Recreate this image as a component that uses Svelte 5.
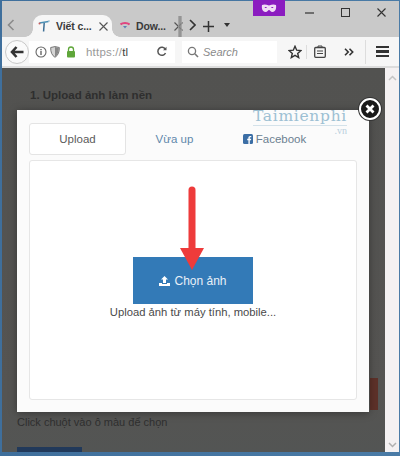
<script>
  const tabs = [
    { id: "upload", label: "Upload", active: true },
    { id: "vua", label: "Vừa up" },
    { id: "fb", label: "Facebook", icon: true }
  ];
</script>

<div class="window">
  <div class="tabstrip">
    <svg class="scroll-left" width="8" height="12" viewBox="0 0 8 12"><path d="M6.500 1 1.500 6l5 5" fill="none" stroke="#8b8b8b" stroke-width="1.600"/></svg>
    <div class="tab active">
      <svg class="favicon" width="12" height="12" viewBox="0 0 12 12"><path d="M1.500 3 10.500 1.500" fill="none" stroke="#4a8fb5" stroke-width="1.500"/><path d="M6.200 3 5.600 11.500" fill="none" stroke="#3d6f96" stroke-width="1.500"/><circle cx="1.500" cy="3.500" r="1" fill="#c65a5a"/><circle cx="11" cy="1" r=".8" fill="#7fb2cc"/></svg>
      <span class="tab-title">Viết c...</span>
      <svg class="tab-close" width="9" height="9" viewBox="0 0 9 9"><path d="M.5.5l8 8M8.500.5l-8 8" stroke="#555" stroke-width="1.100"/></svg>
    </div>
    <div class="tab">
      <svg class="favicon" width="10" height="10" viewBox="0 0 10 10"><path d="M.5 3.500C2 1.500 8 1.500 9.500 3.500" fill="none" stroke="#e0457f" stroke-width="2.200"/><path d="M3 5h4L5 7.500z" fill="#5d7fb5"/></svg>
      <span class="tab-title">Dow...</span>
      <svg class="tab-close" width="9" height="9" viewBox="0 0 9 9"><path d="M.5.5l8 8M8.500.5l-8 8" stroke="#555" stroke-width="1.100"/></svg>
    </div>
    <div class="tab-fade"></div>
    <svg class="scroll-right" width="7" height="12" viewBox="0 0 7 12"><path d="M1 1l5 5-5 5" fill="none" stroke="#333" stroke-width="1.600"/></svg>
    <svg class="plus" width="11" height="11" viewBox="0 0 11 11"><path d="M5.500 0v11M0 5.500h11" stroke="#333" stroke-width="1.500"/></svg>
    <svg class="caret" width="6" height="4" viewBox="0 0 6 4"><path d="M0 0h6L3 4z" fill="#333"/></svg>
    <div class="mask-badge">
      <svg width="16" height="9" viewBox="0 0 16 9"><path fill-rule="evenodd" d="M1 1c2-1 4-.6 7 .4 3-1 5-1.400 7-.4.6 3-.4 7-3.500 7C9.500 8 9 6 8 6s-1.500 2-3.500 2C1.400 8 .4 4 1 1zm2.500 2.200c1-.5 2-.3 2.600.5-1 .6-2 .4-2.600-.5zm9 0c-1-.5-2-.3-2.600.5 1 .6 2 .4 2.600-.5z" fill="#f0dcf5"/></svg>
    </div>
    <div class="win-controls">
      <svg width="9" height="2" viewBox="0 0 9 2"><path d="M0 1h9" stroke="#333" stroke-width="1.200"/></svg>
      <svg width="9" height="9" viewBox="0 0 9 9"><rect x=".5" y=".5" width="8" height="8" fill="none" stroke="#333"/></svg>
      <svg width="9" height="9" viewBox="0 0 9 9"><path d="M.5.5l8 8M8.500.5l-8 8" stroke="#333" stroke-width="1.100"/></svg>
    </div>
  </div>

  <div class="toolbar">
    <div class="back">
      <svg width="14" height="12" viewBox="0 0 14 12"><path d="M6.500 1 2 6l4.500 5M2.500 6H13.500" fill="none" stroke="#333" stroke-width="2.600"/></svg>
    </div>
    <div class="urlbar">
      <svg width="12" height="12" viewBox="0 0 12 12"><circle cx="6" cy="6" r="5" fill="none" stroke="#666" stroke-width="1.100"/><path d="M6 5v4M6 3v1.200" stroke="#666" stroke-width="1.400"/></svg>
      <svg width="10" height="12" viewBox="0 0 10 12"><path d="M.7 1.500 5 .6l4.300.9c.2 4.500-1.300 8-4.300 9.800C2 9.500.5 6 .7 1.500z" fill="#d5d5d5" stroke="#777"/><path d="M5 1v10C7.500 9 9 6 8.800 2z" fill="#888"/></svg>
      <svg class="lock" width="10" height="12" viewBox="0 0 10 12"><path d="M2.500 5V3.500a2.500 2.500 0 0 1 5 0V5" fill="none" stroke="#5fa63a" stroke-width="1.300"/><rect x="1" y="5" width="8" height="6.500" rx="1" fill="#5fa63a"/></svg>
      <span class="url"><span class="url-dim">https://</span>tl</span>
      <svg class="reload" width="11" height="11" viewBox="0 0 11 11"><path d="M9.300 3.200A4 4 0 1 0 9.500 7" fill="none" stroke="#555" stroke-width="1.500"/><path d="M10.500 .8v3.500H7z" fill="#555"/></svg>
    </div>
    <div class="searchbar">
      <svg width="12" height="12" viewBox="0 0 12 12"><circle cx="5" cy="5" r="3.600" fill="none" stroke="#777" stroke-width="1.300"/><path d="M7.800 7.800 11 11" stroke="#777" stroke-width="1.600"/></svg>
      <span class="search-text">Search</span>
    </div>
    <svg class="star" width="14" height="14" viewBox="0 0 14 14"><path d="M7 1.300 8.700 5.200l4.200.4-3.200 2.800 1 4.200L7 10.400 3.300 12.600l1-4.200L1.100 5.600l4.200-.4z" fill="none" stroke="#333" stroke-width="1.400"/></svg>
    <div class="sep"></div>
    <svg class="clip" width="12" height="13" viewBox="0 0 12 13"><rect x=".7" y="2.500" width="10.600" height="9.800" rx="1" fill="none" stroke="#444" stroke-width="1.300"/><path d="M4 2.500V1h4v1.500M3 6h6M3 8.500h6" fill="none" stroke="#444"/></svg>
    <svg class="more" width="10" height="8" viewBox="0 0 10 8"><path d="M1 .8 4.200 4 1 7.200M5.500 .8 8.700 4 5.500 7.200" fill="none" stroke="#333" stroke-width="1.600"/></svg>
    <div class="sep sep-menu"></div>
    <div class="burger"><span></span><span></span><span></span></div>
  </div>

  <div class="body">
    <div class="page">
      <h4>1. Upload ảnh làm nền</h4>
      <p class="hint">Click chuột vào ô màu để chọn</p>
      <div class="page-button"></div>
      <div class="page-red"></div>

      <div class="modal">
        <button class="close" type="button" aria-label="Close">
          <svg width="10" height="10" viewBox="0 0 10 10"><path d="M1.500 1.500l7 7M8.500 1.500l-7 7" stroke="#fff" stroke-width="2.800"/></svg>
        </button>
        <div class="watermark">
          <span class="wm-name">Taimienphi</span>
          <span class="wm-vn">.vn</span>
        </div>
        <ul class="tabs">
          {#each tabs as tab}
            <li class:current={tab.active}>
              {#if tab.icon}
                <svg width="10" height="10" viewBox="0 0 10 10"><rect width="10" height="10" rx="1.500" fill="#3b6ea5"/><path d="M6.800 10V6.300h1.200l.2-1.500H6.800V4c0-.4.100-.7.700-.7h.8V2c-.2 0-.6-.1-1.100-.1-1.100 0-1.800.7-1.800 1.900v1H4.200v1.500h1.200V10z" fill="#fff"/></svg>
              {/if}
              {tab.label}
            </li>
          {/each}
        </ul>
        <div class="panel">
          <button class="choose" type="button">
            <svg width="11" height="10" viewBox="0 0 11 10"><path d="M5.500 0 9 3.500H7V7H4V3.500H2zM0 7h3v1h5V7h3v3H0z" fill="#fff"/></svg>
            Chọn ảnh
          </button>
          <p class="caption">Upload ảnh từ máy tính, mobile...</p>
        </div>
        <svg class="arrow" width="24" height="84" viewBox="0 0 24 84"><path d="M12 4v60" stroke="#ee3b3b" stroke-width="7" stroke-linecap="round"/><path d="M0 62h24L12 84z" fill="#ee3b3b"/></svg>
      </div>
    </div>
    <div class="scrollbar">
      <svg width="9" height="6" viewBox="0 0 9 6"><path d="M1 5l3.500-3.500L8 5" fill="none" stroke="#c4c4c4" stroke-width="1.500"/></svg>
      <svg width="9" height="6" viewBox="0 0 9 6"><path d="M1 1l3.500 3.500L8 1" fill="none" stroke="#b0b0b0" stroke-width="1.500"/></svg>
    </div>
  </div>
</div>

<style>
  :global(body) {
    margin: 0;
    background: #4a7ba6;
  }

  .window {
    width: 400px;
    height: 456px;
    box-sizing: border-box;
    padding: 1px 1px 4px 2px;
    display: flex;
    flex-direction: column;
    font-family: "Liberation Sans", Arial, sans-serif;
    overflow: hidden;
    background: linear-gradient(90deg, #3f6f9c, #4a7ba6);
  }

  .tabstrip {
    height: 36px;
    flex: none;
    position: relative;
    display: flex;
    align-items: flex-end;
    background: #c9c9c9;
  }

  .scroll-left {
    margin: 0 0 6px 5px;
  }

  .tab {
    height: 22px;
    display: flex;
    align-items: center;
    font-size: 10.500px;
    color: #333;
    box-sizing: border-box;
  }

  .tab.active {
    position: relative;
    width: 79px;
    margin-left: 18px;
    padding-left: 5px;
    background: #f6f6f6;
    border-radius: 9px 9px 0 0;
  }

  .tab.active::before,
  .tab.active::after {
    content: "";
    position: absolute;
    bottom: 0;
    width: 8px;
    height: 8px;
  }

  .tab.active::before {
    left: -8px;
    background: radial-gradient(circle at 0 0, transparent 7.500px, #f6f6f6 8px);
  }

  .tab.active::after {
    right: -8px;
    background: radial-gradient(circle at 100% 0, transparent 7.500px, #f6f6f6 8px);
  }

  .tab:not(.active) {
    width: 63px;
    margin-left: 8px;
  }

  .tab-title {
    margin-left: 6px;
    white-space: nowrap;
    font-weight: 700;
    letter-spacing: -0.100px;
    color: #3a3a3a;
  }

  .tab.active .tab-close {
    margin-left: 7px;
  }

  .tab:not(.active) .tab-close {
    margin-left: auto;
  }

  .tab-fade {
    width: 4px;
    height: 21px;
    margin-left: -5px;
    background: linear-gradient(90deg, #a8a8a8, #7d7d7d, #a8a8a8);
    opacity: 0.8;
  }

  .scroll-right {
    margin: 0 0 6px 7px;
  }

  .plus {
    margin: 0 0 5px 7px;
  }

  .caret {
    margin: 0 0 10px 10px;
  }

  .mask-badge {
    position: absolute;
    left: 251px;
    top: -1px;
    width: 32px;
    height: 16px;
    background: #8b1cc0;
    display: flex;
    align-items: center;
    justify-content: center;
  }

  .win-controls {
    position: absolute;
    right: 13px;
    top: 7px;
    display: flex;
    align-items: center;
    gap: 27px;
  }

  .toolbar {
    height: 31px;
    box-sizing: border-box;
    flex: none;
    display: flex;
    align-items: center;
    background: #f6f6f6;
    border-bottom: 2px solid #dcdcdc;
  }

  .back {
    width: 24px;
    height: 24px;
    margin-left: 3px;
    box-sizing: border-box;
    flex: none;
    border: 1px solid #c8c8c8;
    border-radius: 50%;
    background: #fafafa;
    display: flex;
    align-items: center;
    justify-content: center;
  }

  .urlbar {
    width: 146px;
    height: 22px;
    padding: 0 8px 0 6px;
    box-sizing: border-box;
    flex: none;
    display: flex;
    align-items: center;
    gap: 3px;
    background: #fff;
  }

  .lock {
    margin-left: 3px;
  }

  .url {
    flex: 1;
    margin-left: 7px;
    font-size: 11.500px;
    color: #444;
    letter-spacing: .2px;
  }

  .url-dim {
    color: #999;
  }

  .searchbar {
    width: 95px;
    height: 22px;
    margin-left: 7px;
    padding-left: 5px;
    box-sizing: border-box;
    flex: none;
    display: flex;
    align-items: center;
    gap: 4px;
    background: #fff;
  }

  .search-text {
    font-size: 11px;
    font-style: italic;
    color: #8a8a8a;
  }

  .star {
    margin-left: 11px;
  }

  .sep {
    width: 1px;
    height: 14px;
    margin-left: 4px;
    background: #ddd;
  }

  .clip {
    margin-left: 7px;
  }

  .more {
    margin-left: 18px;
  }

  .sep-menu {
    height: 24px;
    margin-left: 11px;
  }

  .burger {
    margin-left: 10px;
    width: 13px;
    display: flex;
    flex-direction: column;
    gap: 2px;
  }

  .burger span {
    height: 2.500px;
    background: #333;
  }

  .body {
    flex: 1;
    min-height: 0;
    display: flex;
  }

  .page {
    flex: 1;
    position: relative;
    overflow: hidden;
    padding: 21px 0 0 28px;
    background: linear-gradient(180deg, #525250 0%, #555452 85%, #535554 100%);
  }

  h4 {
    margin: 0;
    font-size: 11.500px;
    font-weight: 700;
    color: #2e2e2e;
  }

  .hint {
    position: absolute;
    left: 15px;
    top: 348px;
    margin: 0;
    font-size: 11px;
    color: #2f2f2f;
  }

  .page-button {
    position: absolute;
    left: 15px;
    top: 379px;
    width: 65px;
    height: 10px;
    background: #21395a;
  }

  .page-red {
    position: absolute;
    left: 368px;
    top: 310px;
    width: 8px;
    height: 32px;
    background: #5d3129;
  }

  .modal {
    position: absolute;
    left: 15px;
    top: 42px;
    width: 352px;
    height: 302px;
    box-sizing: border-box;
    padding: 13px 12px 12px 12px;
    background: #fbfbfb;
    box-shadow: 0 1px 8px rgba(0, 0, 0, .35);
    display: flex;
    flex-direction: column;
    gap: 5px;
  }

  .close {
    position: absolute;
    right: -12px;
    top: -12px;
    width: 22px;
    height: 22px;
    padding: 0;
    border: 2px solid #fff;
    border-radius: 50%;
    background: #191919;
    box-shadow: 0 0 0 1px #333;
    display: flex;
    align-items: center;
    justify-content: center;
  }

  .watermark {
    position: absolute;
    left: 236px;
    top: -1px;
    display: flex;
    flex-direction: column;
    line-height: 1;
  }

  .wm-name {
    font-family: "DejaVu Serif", "Liberation Serif", serif;
    font-size: 15.500px;
    letter-spacing: 0.700px;
    color: #9dc0d3;
    border-bottom: 1px solid #d4e2ea;
  }

  .wm-vn {
    align-self: flex-end;
    font-family: "Liberation Serif", serif;
    font-size: 10px;
    color: #b9cfdb;
  }

  .tabs {
    list-style: none;
    margin: 0;
    padding: 0;
    display: flex;
    height: 32px;
    flex: none;
  }

  .tabs li {
    width: 97px;
    box-sizing: border-box;
    display: flex;
    align-items: center;
    justify-content: center;
    gap: 3px;
    font-size: 11.500px;
    color: #5f88ab;
  }

  .tabs li:nth-child(3) {
    width: 93px;
    margin-left: 5px;
    color: #6c7f91;
  }

  .tabs li.current {
    border: 1px solid #e4e4e4;
    border-radius: 3px;
    color: #5b5b5b;
    background: #fff;
  }

  .panel {
    flex: 1;
    box-sizing: border-box;
    border: 1px solid #e6e6e6;
    border-radius: 3px;
    background: #fff;
    padding-top: 96px;
    display: flex;
    flex-direction: column;
    align-items: center;
  }

  .choose {
    width: 120px;
    height: 47px;
    flex: none;
    border: 0;
    padding: 0;
    background: #337ab7;
    color: #e8f0f7;
    font-family: inherit;
    font-size: 12px;
    display: flex;
    align-items: center;
    justify-content: center;
    gap: 4px;
  }

  .caption {
    margin: 1px 0 0;
    font-size: 11.250px;
    line-height: 14px;
    color: #4a4a4a;
  }

  .arrow {
    position: absolute;
    left: 163px;
    top: 76px;
  }

  .scrollbar {
    width: 14px;
    flex: none;
    background: #f4f1f2;
    display: flex;
    flex-direction: column;
    justify-content: space-between;
    align-items: center;
    padding: 7px 0 4px;
    box-sizing: border-box;
  }
</style>
